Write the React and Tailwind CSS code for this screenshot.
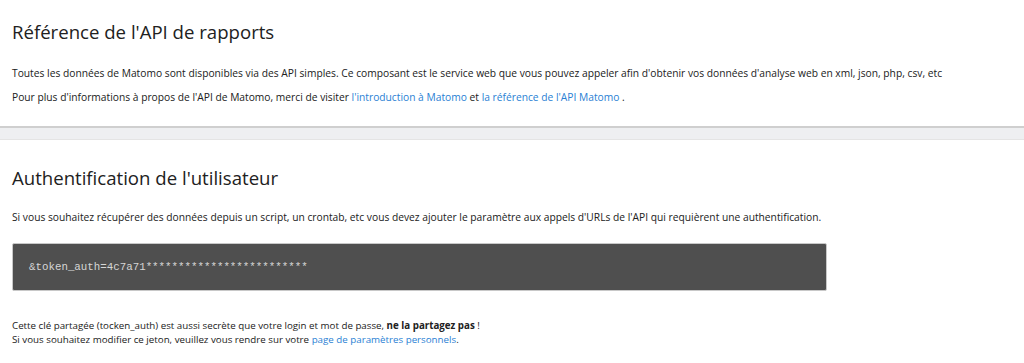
export default function App() {
  const body = { fontFamily: '"Open Sans", "Noto Sans", sans-serif' };

  return (
    <div className="min-h-[363px] bg-white text-[#212121]" style={body}>
      <section className="bg-white px-3 pt-[19px] pb-[21px]">
        <h2 className="text-[18.6px] leading-[26px] text-[#212121]">
          Référence de l'API de rapports
        </h2>
        <p className="mt-[20px] text-[10.25px] leading-[16px]">
          Toutes les données de Matomo sont disponibles via des API simples. Ce composant est le service web que vous pouvez appeler afin d'obtenir vos données d'analyse web en xml, json, php, csv, etc
        </p>
        <p className="mt-[8px] text-[10.25px] leading-[16px]">
          Pour plus d'informations à propos de l'API de Matomo, merci de visiter{" "}
          <a className="text-[#2a7fd4]">l'introduction à Matomo</a> et{" "}
          <a className="text-[#2a7fd4]">la référence de l'API Matomo</a> .
        </p>
      </section>

      <div className="h-[14px] border-t-2 border-b border-t-[#cfcfcf] border-b-[#e4e4e4] bg-[#eeeff1]" />

      <section className="bg-white px-3 pt-[24px]">
        <h2 className="text-[18.6px] leading-[28px] text-[#212121]">
          Authentification de l'utilisateur
        </h2>
        <p className="mt-[17px] text-[10.25px] leading-[16px]">
          Si vous souhaitez récupérer des données depuis un script, un crontab, etc vous devez ajouter le paramètre aux appels d'URLs de l'API qui requièrent une authentification.
        </p>
        <div className="mt-[18px] flex h-[48px] w-[815px] items-center rounded-[2px] border border-[#c8c8c8] bg-[#4f4f4f] px-4">
          <span className="text-[10.8px] text-[#d6d6d6]" style={{ fontFamily: '"Liberation Mono", monospace' }}>
            &amp;token_auth=4c7a71*************************
          </span>
        </div>
        <p className="mt-[28px] text-[9.75px] leading-[14px]">
          Cette clé partagée (tocken_auth) est aussi secrète que votre login et mot de passe, <strong className="font-bold">ne la partagez pas</strong> !
          <br />
          Si vous souhaitez modifier ce jeton, veuillez vous rendre sur votre{" "}
          <a className="text-[#2a7fd4]">page de paramètres personnels</a>.
        </p>
      </section>
    </div>
  );
}
